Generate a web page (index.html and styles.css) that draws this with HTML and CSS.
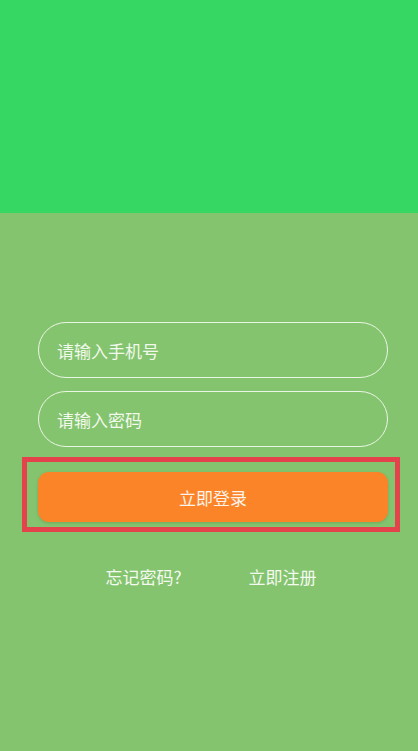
FILE: index.html
```html
<!DOCTYPE html>
<html lang="zh">
<head>
<meta charset="utf-8">
<title>登录</title>
<link rel="stylesheet" href="styles.css">
</head>
<body>
<header class="banner"></header>
<main class="panel">
  <form class="form">
    <div class="field"><input class="input" type="text" placeholder="请输入手机号"></div>
    <div class="field"><input class="input" type="password" placeholder="请输入密码"></div>
    <div class="highlight">
      <button class="login" type="button">立即登录</button>
    </div>
  </form>
  <nav class="links">
    <a class="link">忘记密码?</a>
    <a class="link">立即注册</a>
  </nav>
</main>
</body>
</html>
```
FILE: styles.css
```css
html, body {
  margin: 0;
  padding: 0;
  height: 100%;
}
body {
  font-family: "Noto Sans CJK SC", "Noto Sans", sans-serif;
  background: #84c46f;
  display: flex;
  flex-direction: column;
}
.banner {
  height: 213px;
  background: #36d763;
  flex: none;
}
.panel {
  flex: 1;
  background: #84c46f;
  padding-top: 109px;
}
.form {
  display: flex;
  flex-direction: column;
  margin: 0;
}
.field {
  margin: 0 30px 13px 38px;
}
.input {
  box-sizing: border-box;
  width: 100%;
  height: 56px;
  border: 1.5px solid #eaf6e4;
  border-radius: 28px;
  background: transparent;
  padding: 0 18px;
  font-family: inherit;
  font-size: 17px;
  color: #ffffff;
  outline: none;
}
.input::placeholder {
  color: #f1f8ec;
}
.highlight {
  box-sizing: border-box;
  margin: -3px 18px 0 22px;
  border: 5px solid #e5434b;
  padding: 10px 7px 5px 11px;
}
.login {
  display: block;
  width: 100%;
  height: 50px;
  border: none;
  border-radius: 11px;
  background: #fb8429;
  color: #fdf3ea;
  font-family: inherit;
  font-size: 17px;
  box-shadow: 0 1px 3px rgba(80, 120, 60, 0.35);
}
.links {
  display: flex;
  justify-content: center;
  gap: 67px;
  margin-top: 33px;
  padding-left: 4px;
}
.link {
  color: #f4f9f0;
  font-size: 17px;
  line-height: 24px;
}
```
